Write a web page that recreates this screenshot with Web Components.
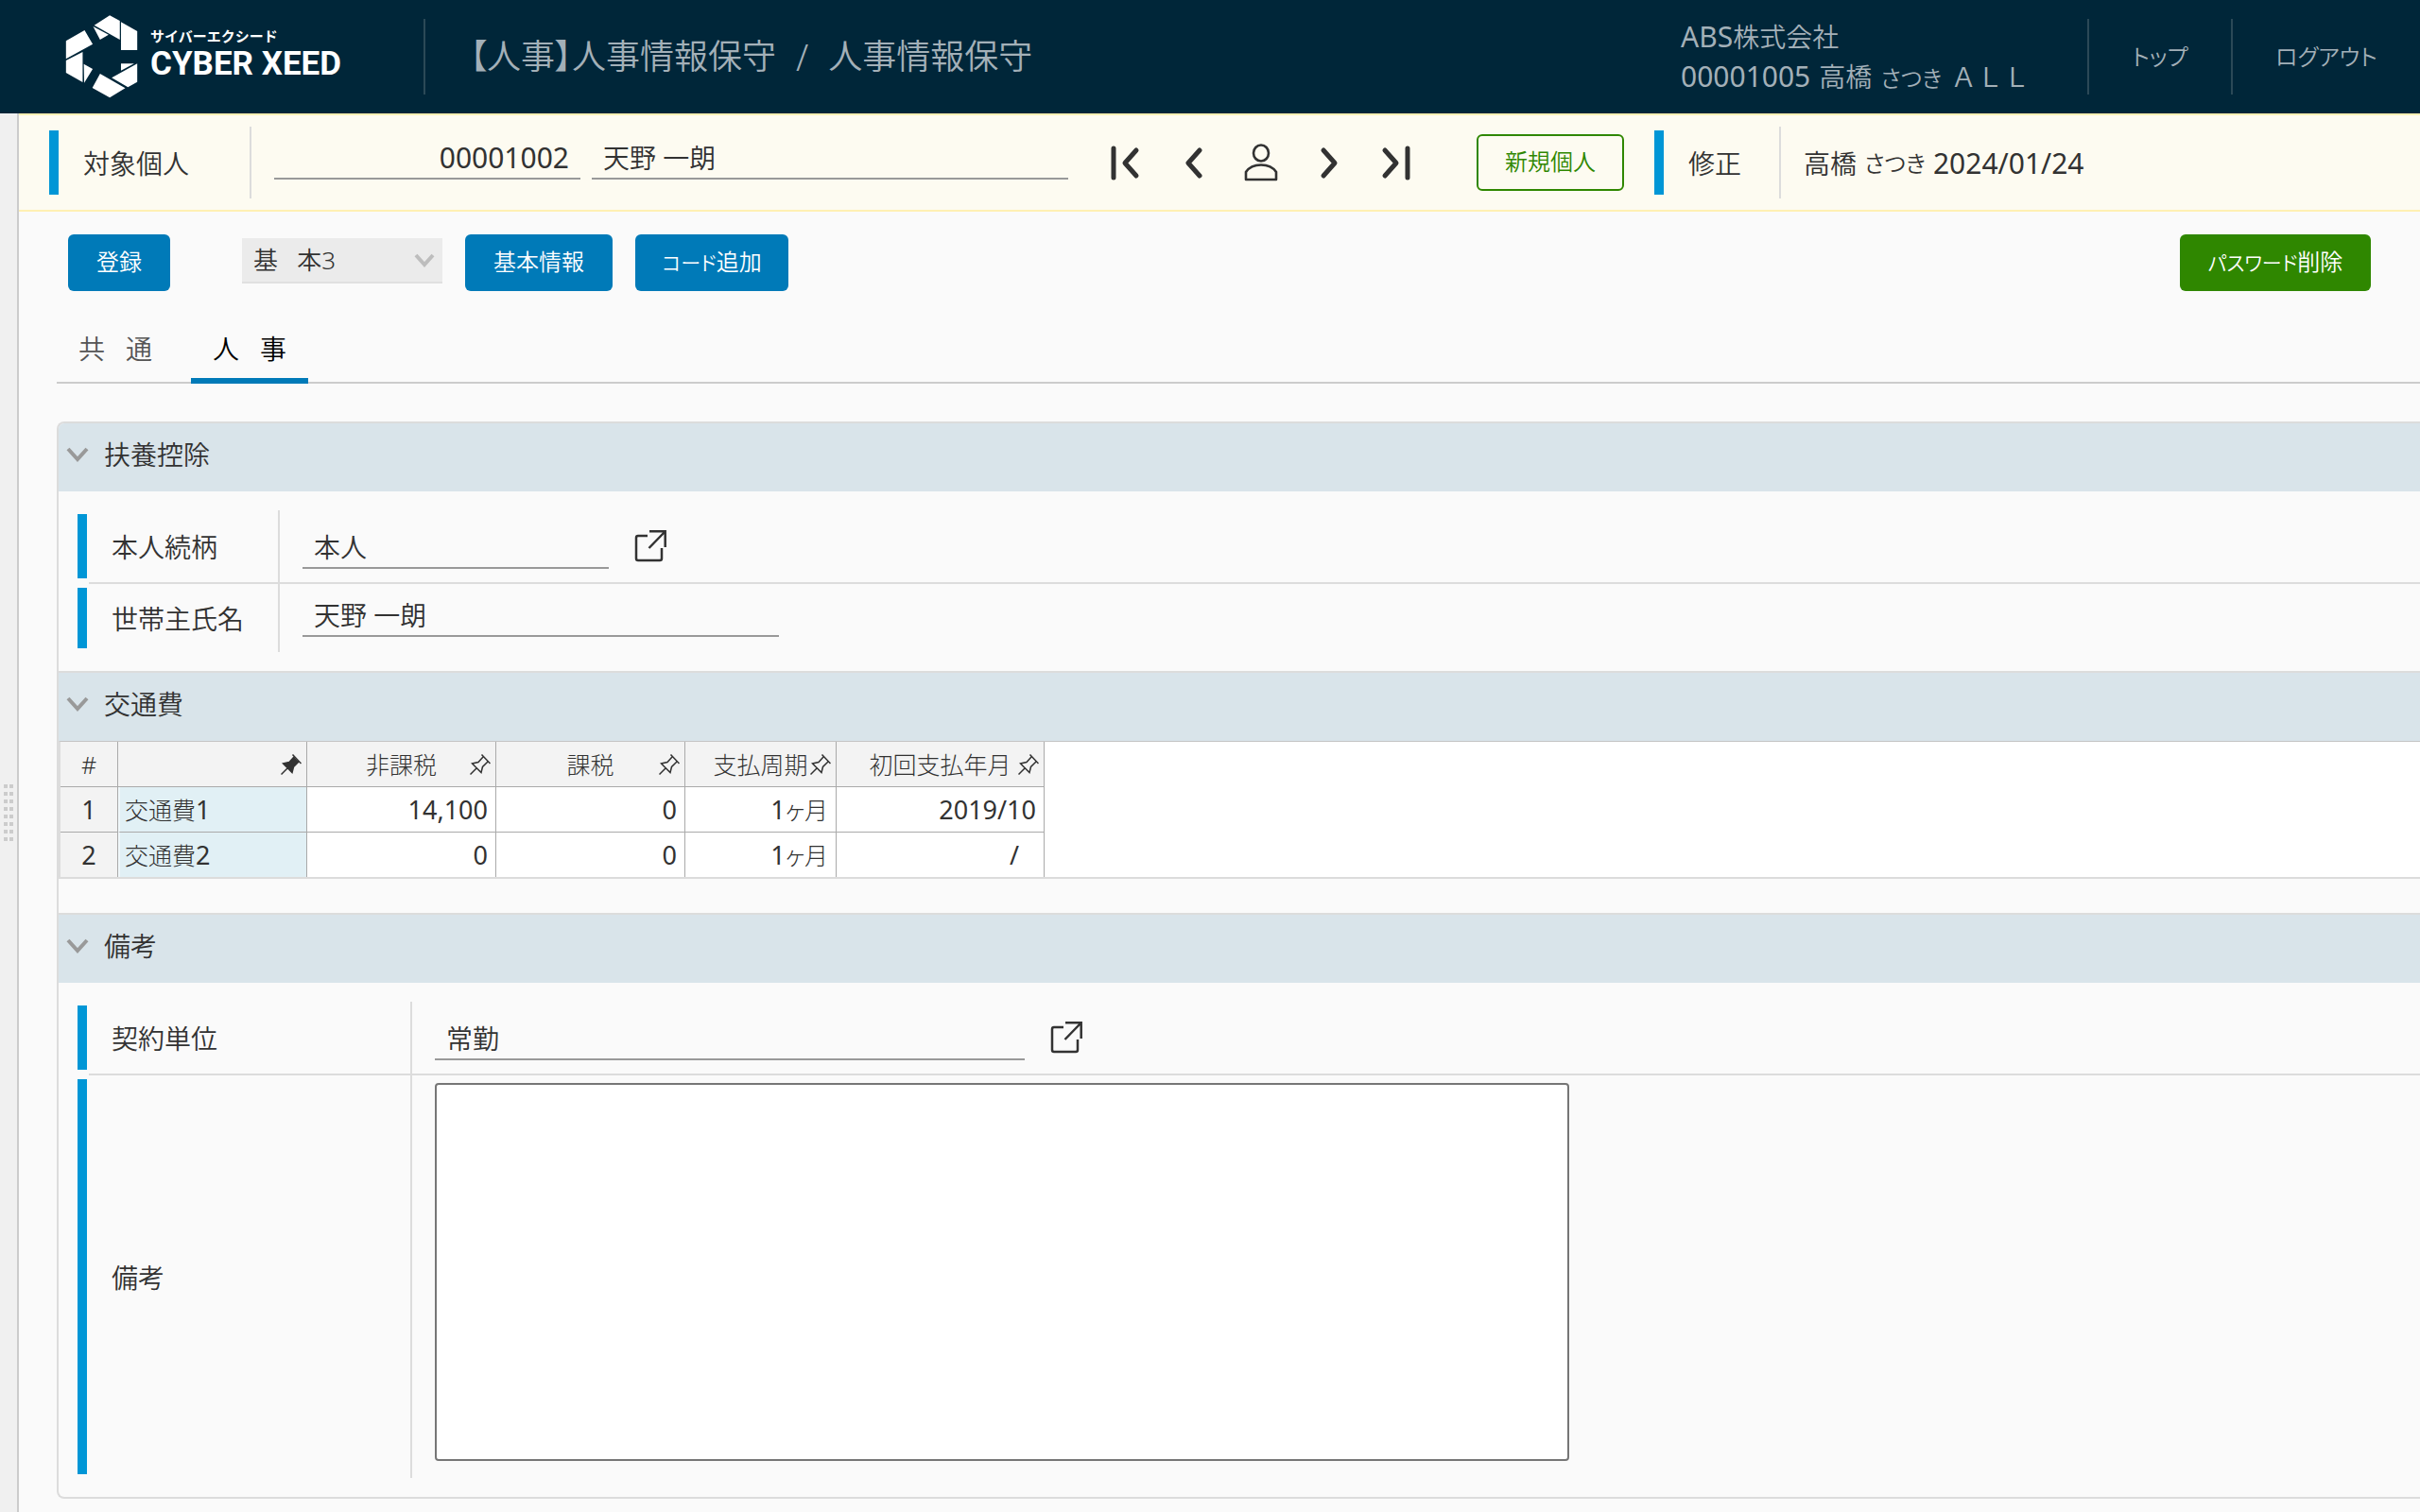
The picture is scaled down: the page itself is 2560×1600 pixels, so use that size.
<!DOCTYPE html>
<html lang="ja">
<head>
<meta charset="utf-8">
<title>人事情報保守</title>
<style>
html, body { margin: 0; }
body {
  --blue: #007ab8; --accent: #0096d6; --green: #2f8700; --line: #dcdcdc; --ink: #323232;
  background: #fafafa; color: var(--ink); min-height: 100vh; display: flex; flex-direction: column;
  font: 28px/42px "Noto Sans", "Noto Sans CJK JP", sans-serif; font-weight: 350;
  font-feature-settings: "palt"; overflow: hidden;
}
app-shell { flex: 1; }
</style>
</head>
<body>
<app-header></app-header>
<app-shell>
  <person-bar></person-bar>
  <tool-bar></tool-bar>
  <tab-strip></tab-strip>
  <section-stack>
    <panel-section heading="扶養控除">
      <field-row label="本人続柄" value="本人" size="short" lookup></field-row>
      <field-row label="世帯主氏名" value="天野 一朗" size="medium" last></field-row>
    </panel-section>
    <panel-section heading="交通費" flush><cost-grid></cost-grid></panel-section>
    <panel-section heading="備考">
      <field-row wide label="契約単位" value="常勤" size="long" lookup></field-row>
      <field-row wide label="備考" memo last></field-row>
    </panel-section>
  </section-stack>
</app-shell>
<script>
const base = `
:host, *, *::before, *::after { box-sizing: border-box; }
button, input, select, textarea { font: inherit; color: inherit; font-feature-settings: inherit; margin: 0; }
button { cursor: pointer; }
a { color: inherit; text-decoration: none; }
svg { display: block; }
.n { font-size: 30px; font-weight: 400; }
.k { font-size: 24px; }
.line { border: 0; border-bottom: 2px solid #999; background: none; height: 48px; padding: 2px 12px 0; outline: 0; border-radius: 0; }
`;
function define(name, css, markup) {
  customElements.define(name, class extends HTMLElement {
    constructor() {
      super();
      const html = typeof markup === 'function' ? markup(this) : markup;
      this.attachShadow({ mode: 'open' }).innerHTML = `<style>${base}${css}</style>${html}`;
    }
  });
}

define('brand-logo', `
:host { display: flex; align-items: center; gap: 13px; color: #fff; }
.words { display: flex; flex-direction: column; }
.kana { font: 700 15px/16px "Noto Sans CJK JP", sans-serif; }
.name { font: 700 35px/44px Roboto, sans-serif; }
`, `
<svg width="77" height="88" viewBox="168 48 188 264" preserveAspectRatio="none" fill="#fff" aria-hidden="true">
<path d="M283 49 309 66V126L243 80ZM312 70 354 99V159H312ZM240 84 280 110 258 126ZM170 130 218 96 239 140 170 187ZM170 192 213 165V261L170 231ZM216 203 239 219 217 263ZM258 234 323 280 283 310 238 279ZM354 202V260L330 277 288 247ZM312 202H346L312 224Z"/></svg>
<div class="words"><span class="kana">サイバーエクシード</span><span class="name">CYBER XEED</span></div>`);

define('app-header', `
:host { display: flex; align-items: stretch; background: #002639; color: #a3b0b8; padding: 20px 0; height: 120px; }
brand-logo { width: 448px; padding-left: 69px; flex: none; }
h1 { margin: 0; flex: 1; display: flex; align-items: center; gap: 21px; font-size: 36px; font-weight: inherit; border-left: 2px solid #2b4957; padding-left: 47px; white-space: nowrap; }
h1 .sep { font-size: 38px; }
.user { width: 430px; flex: none; display: flex; flex-direction: column; justify-content: center; white-space: nowrap; }
.user div { display: flex; align-items: baseline; line-height: 42px; height: 42px; }
.user .id { gap: 9px; }
.full { font-feature-settings: normal; }
nav { display: flex; flex: none; }
nav a { border-left: 2px solid #2b4957; display: flex; align-items: center; justify-content: center; width: 152px; font-size: 24px; }
nav a + a { width: 200px; }
`, `
<brand-logo></brand-logo>
<h1><span>【人事】人事情報保守</span><span class="sep">/</span><span>人事情報保守</span></h1>
<div class="user"><div><span class="n">ABS</span><span>株式会社</span></div><div class="id"><span class="n">00001005</span> <span>高橋</span> <span class="k">さつき</span> <span class="full">ＡＬＬ</span></div></div>
<nav><a href="#top">トップ</a><a href="#logout">ログアウト</a></nav>`);

define('app-shell', `
:host { display: flex; }
.grip { flex: none; width: 20px; background: #f0f0f0; border-right: 2px solid #ccc; display: flex; justify-content: center; padding-top: 710px; }
.main { flex: 1; min-width: 0; }
`, `
<div class="grip"><svg width="10" height="60" fill="#ccc" aria-hidden="true">${[0,1,2,3,4,5,6,7].map(i => `<rect y="${i*8}" width="4" height="4"/><rect x="6" y="${i*8}" width="4" height="4"/>`).join('')}</svg></div>
<div class="main"><slot></slot></div>`);

define('person-bar', `
:host { display: flex; background: #fdfbf1; border: solid #fff0b3; border-width: 2px 0; padding: 12px 0 12px 32px; height: 104px; }
.mark { width: 10px; background: var(--accent); margin: 4px 0; flex: none; }
.label { display: flex; align-items: center; padding-left: 26px; border-right: 2px solid var(--line); flex: none; padding-top: 2px; }
.person { width: 204px; }
.edit { width: 124px; }
.fields { display: flex; gap: 12px; padding: 8px 0 0 24px; }
.code { width: 324px; text-align: right; font-size: 30px; font-weight: 400; }
.who { width: 504px; }
.nav { display: flex; align-items: center; gap: 32px; margin-left: 40px; }
.nav button { border: 0; background: none; padding: 0; width: 40px; height: 40px; }
.nav svg { stroke: #323232; fill: none; stroke-width: 5; stroke-linecap: round; stroke-linejoin: round; }
.new { align-self: center; margin: 0 32px 0 64px; height: 60px; width: 156px; padding: 0 0 2px; border: 2px solid var(--green); border-radius: 6px; background: none; color: var(--green); font-size: 24px; }
.stamp { display: flex; align-items: center; padding: 2px 0 0 24px; gap: 8px; }
`, `
<span class="mark"></span><label class="label person" for="code">対象個人</label>
<div class="fields"><input id="code" class="line code" value="00001002"><input class="line who" aria-label="氏名" value="天野 一朗"></div>
<div class="nav">
<button aria-label="先頭"><svg width="40" height="40"><path d="M8 5V36M32 7 20 20.500 32 34"/></svg></button>
<button aria-label="前"><svg width="40" height="40"><path d="M27 7 15 20.500 27 34"/></svg></button>
<button aria-label="個人検索"><svg width="40" height="40" style="stroke-width:2.600"><ellipse cx="20" cy="10" rx="8" ry="8.500"/><path d="M4 38V30C8 24 14 22.500 20 22.500S32 24 36 30V38Z"/></svg></button>
<button aria-label="次"><svg width="40" height="40"><path d="M14 7 26 20.500 14 34"/></svg></button>
<button aria-label="末尾"><svg width="40" height="40"><path d="M31 5V36M7 7 19 20.500 7 34"/></svg></button>
</div>
<button class="new">新規個人</button>
<span class="mark"></span><span class="label edit">修正</span>
<div class="stamp"><span>高橋</span><span class="k">さつき</span><span class="n">2024/01/24</span></div>`);

define('tool-bar', `
:host { display: flex; align-items: flex-start; gap: 24px; padding: 24px 52px 0; }
button { height: 60px; border: 0; border-radius: 6px; background: var(--blue); color: #fff; font-size: 24px; padding: 0 0 2px; width: 156px; white-space: nowrap; }
button.save { width: 108px; margin-right: 52px; }
button.add { width: 162px; }
button.pass { width: 202px; background: var(--green); margin-left: auto; }
button .k { font-size: 21px; }
.pick { display: grid; width: 212px; margin-top: 4px; }
.pick > * { grid-area: 1 / 1; }
select { appearance: none; border: 0; border-bottom: 2px solid #e0e0e0; border-radius: 0; background: #ebebeb; height: 48px; padding: 0 12px; font-size: 26px; opacity: 1; }
svg { align-self: center; justify-self: end; margin-right: 8px; pointer-events: none; }
`, `
<button class="save">登録</button>
<div class="pick"><select aria-label="画面"><option>基&nbsp;&nbsp; 本3</option></select>
<svg width="22" height="16" fill="none" stroke="#bdbdbd" stroke-width="4"><path d="M2 2 11 12 20 2"/></svg></div>
<button>基本情報</button><button class="add"><span class="k">コード</span>追加</button><button class="pass"><span class="k">パスワード</span>削除</button>`);

define('tab-strip', `
:host { display: flex; gap: 18px; margin: 36px 0 40px 40px; box-shadow: inset 0 -2px #ccc; }
button { border: 0; border-bottom: 6px solid transparent; background: none; width: 124px; height: 62px; padding: 0 0 6px; color: #555; white-space: nowrap; }
button[aria-selected=true] { border-color: var(--blue); color: #000; }
`, `<button role="tab" aria-selected="false">共&nbsp;&nbsp; 通</button><button role="tab" aria-selected="true">人&nbsp;&nbsp; 事</button>`);

define('section-stack', `
:host { display: block; margin: 0 0 14px 40px; border: 2px solid var(--line); border-right: 0; border-radius: 8px 0 0 8px; overflow: hidden; }
::slotted(:not(:first-child)) { border-top: 2px solid var(--line); }
`, `<slot></slot>`);

define('panel-section', `
:host { display: block; }
h2 { margin: 0; height: 72px; background: #d9e4ea; display: flex; align-items: center; font-size: 28px; font-weight: inherit; padding: 0 0 6px; }
h2 button { border: 0; background: none; padding: 0 16px 0 8px; }
.body { padding: 20px 0 20px 20px; }
:host([flush]) .body { padding: 0 0 36px; }
`, el => `
<h2><button aria-label="開閉"><svg width="24" height="18" fill="none" stroke="#999" stroke-width="4"><path d="M2 3 12 14 22 3"/></svg></button>${el.getAttribute('heading')}</h2>
<div class="body"><slot></slot></div>`);

define('field-row', `
:host { display: flex; gap: 2px; }
.mark { width: 10px; background: var(--accent); margin: 4px 0 6px; flex: none; }
:host([last]) .mark { margin-bottom: 4px; }
.row { flex: 1; display: flex; min-height: 72px; border-bottom: 2px solid var(--line); }
:host([last]) .row { border-bottom: 0; }
label { width: 202px; padding: 2px 0 0 24px; border-right: 2px solid var(--line); display: flex; align-items: center; flex: none; }
:host([wide]) label { width: 342px; }
.cell { padding: 8px 0 8px 24px; display: flex; align-items: flex-start; }
:host([lookup]) .cell { align-items: center; }
.short { width: 324px; } .medium { width: 504px; } .long { width: 624px; }
button { width: 88px; height: 60px; border: 0; background: none; padding: 0 27px; }
textarea { width: 1200px; height: 400px; border: 2px solid #767676; border-radius: 4px; background: #fff; padding: 8px 12px; resize: none; margin-bottom: 10px; }
`, el => `
<span class="mark"></span>
<div class="row"><label for="f">${el.getAttribute('label')}</label>
<div class="cell">${el.hasAttribute('memo') ? '<textarea id="f"></textarea>' : `<input id="f" class="line ${el.getAttribute('size')}" value="${el.getAttribute('value')}">`}
${el.hasAttribute('lookup') ? '<button aria-label="参照"><svg width="34" height="36" fill="none" stroke="#323232" stroke-width="2.500"><path d="M14 7H4Q2 7 2 9V31Q2 33 4 33H27Q29 33 29 31V20M16 2.200H32.700V19M32 3 15.500 20"/></svg></button>' : ''}</div></div>`);

const pin = solid => `<svg class="pin" width="22" height="22" fill="${solid ? '#323232' : 'none'}" stroke="#323232" stroke-width="1.500" role="img" aria-label="固定"><path d="M12.500.5 21.500 10M14 3 9 8.500 2.500 10 12 19.500 13.500 13.500 19 8M7 15 .5 21.500"/></svg>`;
define('cost-grid', `
:host { display: block; background: #fff; border: solid var(--line); border-width: 1px 0 2px 2px; border-top-color: #c4c4c4; }
table { border-collapse: separate; border-spacing: 0; table-layout: fixed; width: 1041px; font-size: 25px; line-height: 36px; }
th, td { height: 48px; padding: 0 8px 0 8px; border: solid #aaa; border-width: 0 1px 1px 0; text-align: right; font-weight: 300; white-space: nowrap; }
tbody tr:last-child > * { border-bottom: 0; height: 47px; }
thead th { background: #f3f3f3; padding: 0 5px; }
.head { display: grid; grid-template-columns: 1fr auto 1fr; align-items: center; }
.pin { grid-column: 3; justify-self: end; }
.head span { grid-column: 2; }
.no { text-align: center; background: #f3f3f3; }
tbody { font-size: 27px; }
tbody td, tbody th { font-weight: 400; }
td .c { font-size: 25px; font-weight: 300; }
.name { text-align: left; background: #e1f0f5; padding-left: 5px; border-left: 2px solid #f0f7fa; }
.blank { padding-right: 26px; }
`, `
<table><colgroup><col style="width:61px"><col style="width:200px"><col style="width:200px"><col style="width:200px"><col style="width:160px"><col style="width:220px"></colgroup>
<thead><tr><th class="no">#</th><th><div class="head">${pin(true)}</div></th>${['非課税','課税','支払周期','初回支払年月'].map(t => `<th><div class="head"><span>${t}</span>${pin(false)}</div></th>`).join('')}</tr></thead>
<tbody>
<tr><th class="no">1</th><td class="name"><span class="c">交通費</span>1</td><td>14,100</td><td>0</td><td>1<span class="c">ヶ月</span></td><td>2019/10</td></tr>
<tr><th class="no">2</th><td class="name"><span class="c">交通費</span>2</td><td>0</td><td>0</td><td>1<span class="c">ヶ月</span></td><td class="blank">/</td></tr>
</tbody></table>`);
</script>
</body>
</html>
